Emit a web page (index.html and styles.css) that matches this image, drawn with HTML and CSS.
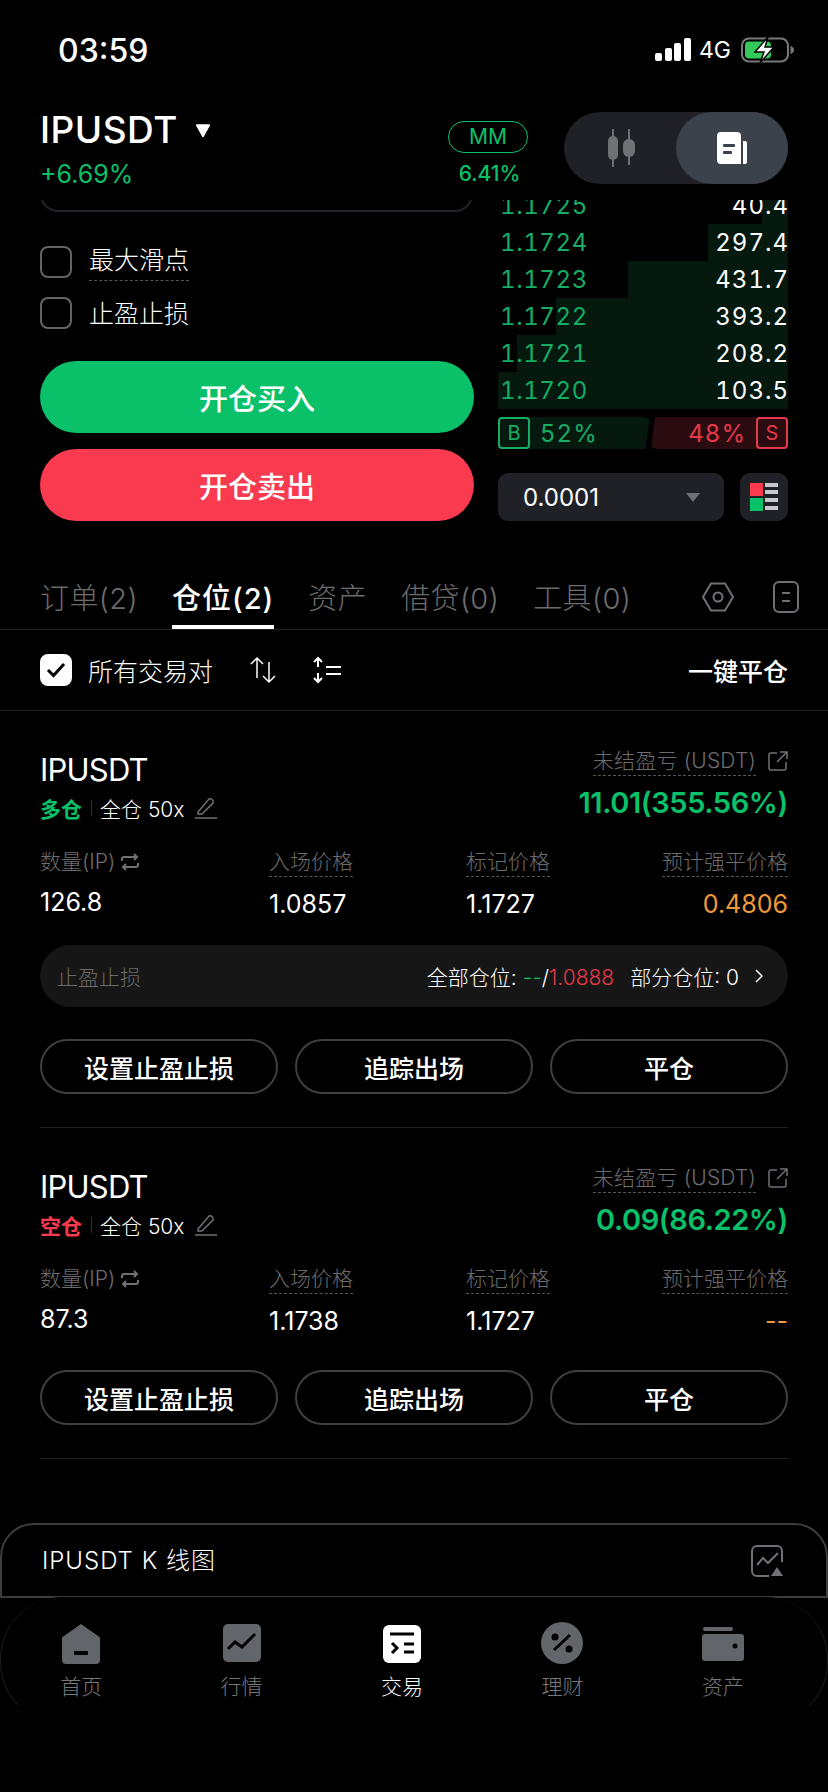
FILE: index.html
```html
<!DOCTYPE html>
<html lang="zh-CN">
<head>
    <meta charset="UTF-8">
    <meta name="viewport" content="width=device-width, initial-scale=1.0">
    <title>IPUSDT</title>
    <link rel="stylesheet" href="styles.css">
</head>
<body>
    <div class="screen">
        <div class="status-bar">
            <span class="time">03:59</span>
            <div class="status-right">
                <svg width="36" height="24" viewBox="0 0 36 24" fill="#fff"><rect x="0" y="15" width="7" height="8" rx="2"/><rect x="10" y="10" width="7" height="13" rx="2"/><rect x="19" y="5" width="7" height="18" rx="2"/><rect x="29" y="0" width="7" height="23" rx="2"/></svg>
                <span class="net">4G</span>
                <svg width="54" height="26" viewBox="0 0 54 26"><rect x="1" y="1.500" width="46" height="23" rx="7" fill="none" stroke="#77797b" stroke-width="2"/><rect x="4" y="4.500" width="26" height="17" rx="4" fill="#34c759"/><path d="M49.500 9v8c2-.6 3.500-2 3.500-4s-1.500-3.400-3.500-4z" fill="#77797b"/><path d="M27 0 14 15h9l-4 11 14-16h-9z" fill="#fff" stroke="#000" stroke-width="1.500"/></svg>
            </div>
        </div>

        <div class="pair-head">
            <div class="pair-info">
                <div class="pair-name">IPUSDT <svg class="caret" width="16" height="15" viewBox="0 0 18 16"><path d="M2 2h14L9 14.500z" fill="#fff" stroke="#fff" stroke-width="2" stroke-linejoin="round"/></svg></div>
                <div class="pair-change">+6.69%</div>
            </div>
            <div class="mm">
                <div class="mm-badge">MM</div>
                <div class="mm-value">6.41%</div>
            </div>
            <div class="view-toggle">
                <div class="toggle-item">
                    <svg width="32" height="38" viewBox="0 0 32 38" fill="#6f7175"><rect x="8" y="0" width="2" height="38"/><rect x="4" y="7" width="10" height="24" rx="5"/><rect x="24" y="0" width="2" height="36"/><rect x="19" y="10" width="12" height="18" rx="6"/></svg>
                </div>
                <div class="toggle-item active">
                    <svg width="32" height="34" viewBox="0 0 32 34"><path d="M5 1h16a4 4 0 0 1 4 4v28H5a4 4 0 0 1-4-4V5a4 4 0 0 1 4-4z" fill="#fff"/><path d="M27 10h2a2 2 0 0 1 2 2v19a2 2 0 0 1-2 2h-2z" fill="#fff"/><rect x="7" y="13" width="12" height="3" rx="1" fill="#3c424c"/><rect x="7" y="20" width="9" height="3" rx="1" fill="#3c424c"/></svg>
                </div>
            </div>
        </div>

        <div class="scroll-area">
            <div class="trade">
                <div class="order-form">
                    <div class="form-stub"></div>
                    <div class="check-row">
                        <span class="check"></span>
                        <span class="check-label dashed">最大滑点</span>
                    </div>
                    <div class="check-row">
                        <span class="check"></span>
                        <span class="check-label">止盈止损</span>
                    </div>
                    <button class="open-btn buy">开仓买入</button>
                    <button class="open-btn sell">开仓卖出</button>
                </div>
                <div class="book">
                    <div class="book-rows">
                        <div class="book-row"><i class="depth d1"></i><span class="price">1.1725</span><span class="qty">40.4</span></div>
                        <div class="book-row"><i class="depth d2"></i><span class="price">1.1724</span><span class="qty">297.4</span></div>
                        <div class="book-row"><i class="depth d3"></i><span class="price">1.1723</span><span class="qty">431.7</span></div>
                        <div class="book-row"><i class="depth d4"></i><span class="price">1.1722</span><span class="qty">393.2</span></div>
                        <div class="book-row"><i class="depth d5"></i><span class="price">1.1721</span><span class="qty">208.2</span></div>
                        <div class="book-row"><i class="depth d6"></i><span class="price">1.1720</span><span class="qty">103.5</span></div>
                    </div>
                    <div class="ratio">
                        <div class="ratio-side ratio-buy"><span class="ratio-box">B</span><span>52%</span></div>
                        <div class="ratio-side ratio-sell"><span>48%</span><span class="ratio-box">S</span></div>
                    </div>
                    <div class="book-tools">
                        <div class="tick-select">
                            <span>0.0001</span>
                            <svg width="14" height="9" viewBox="0 0 14 9"><path d="M0 0h14L7 9z" fill="#6f7175"/></svg>
                        </div>
                        <div class="layout-btn">
                            <svg width="28" height="28" viewBox="0 0 28 28"><rect x="0" y="0" width="13" height="13" fill="#fa3a4f"/><rect x="0" y="15" width="13" height="13" fill="#0ac16a"/><g fill="#c8c8cc"><rect x="15" y="0" width="13" height="4"/><rect x="15" y="7" width="13" height="4"/><rect x="15" y="15" width="13" height="4"/><rect x="15" y="23" width="13" height="4"/></g></svg>
                        </div>
                    </div>
                </div>
            </div>

            <div class="tabs">
                <div class="tab">订单(2)</div>
                <div class="tab active">仓位(2)</div>
                <div class="tab">资产</div>
                <div class="tab">借贷(0)</div>
                <div class="tab">工具(0)</div>
                <div class="tab-icons">
                    <svg width="32" height="30" viewBox="0 0 32 30" fill="none" stroke="#6f7175" stroke-width="2"><path d="M9 1.500h14L31 15l-8 13.500H9L1 15z" stroke-linejoin="round"/><circle cx="16" cy="15" r="4.500"/></svg>
                    <svg width="26" height="32" viewBox="0 0 26 32" fill="none" stroke="#6f7175" stroke-width="2"><rect x="1" y="1" width="24" height="30" rx="5"/><path d="M9 12h8M9 20h8"/></svg>
                </div>
            </div>

            <div class="filter-row">
                <span class="check checked">
                    <svg width="20" height="16" viewBox="0 0 20 16" fill="none" stroke="#000" stroke-width="3"><path d="M2 8l5.500 5.500L18 2"/></svg>
                </span>
                <span class="filter-label">所有交易对</span>
                <svg class="sort-icon" width="28" height="28" viewBox="0 0 28 28" fill="none" stroke="#fff" stroke-width="1.500"><path d="M8 22V2M2 8l6-6 6 6M20 6v20M14 20l6 6 6-6"/></svg>
                <svg class="list-icon" width="28" height="28" viewBox="0 0 28 28" fill="none" stroke="#fff" stroke-width="2"><path d="M5 11V2M1 6l4-4 4 4M5 17v9M1 22l4 4 4-4M13 11h15M13 18h15"/></svg>
                <span class="close-all">一键平仓</span>
            </div>

            <div class="position">
                <div class="pos-top">
                    <div>
                        <div class="pos-name">IPUSDT</div>
                        <div class="pos-tags">
                            <span class="side long">多仓</span>
                            <span class="tag-line"></span>
                            <span class="margin">全仓 50x</span>
                            <svg width="22" height="22" viewBox="0 0 22 22" fill="none" stroke="#6f7175" stroke-width="1.500"><path d="M3 15 14 2c2-1 5 1 4 4L7 17H3zM0 21h22"/></svg>
                        </div>
                    </div>
                    <div class="pnl">
                        <div class="pnl-label"><span class="dashed">未结盈亏 (USDT)</span><svg width="20" height="20" viewBox="0 0 20 20" fill="none" stroke="#6f7175" stroke-width="1.500"><path d="M9 2H3a2 2 0 0 0-2 2v13a2 2 0 0 0 2 2h13a2 2 0 0 0 2-2v-6M9 11 19 1M12 1h7v7"/></svg></div>
                        <div class="pnl-value">11.01(355.56%)</div>
                    </div>
                </div>
                <div class="pos-grid">
                    <div>
                        <div class="field-label">数量(IP) <svg width="18" height="18" viewBox="0 0 18 18" fill="none" stroke="#6f7175" stroke-width="2"><path d="M1 8V6a2 2 0 0 1 2-2h13M13 1l3 3-3 3M17 10v2a2 2 0 0 1-2 2H2M5 11l-3 3 3 3"/></svg></div>
                        <div class="field-value first">126.8</div>
                    </div>
                    <div>
                        <div class="field-label dashed">入场价格</div>
                        <div class="field-value">1.0857</div>
                    </div>
                    <div>
                        <div class="field-label dashed">标记价格</div>
                        <div class="field-value">1.1727</div>
                    </div>
                    <div class="field-end">
                        <div class="field-label dashed">预计强平价格</div>
                        <div class="field-value orange">0.4806</div>
                    </div>
                </div>
                <div class="tp-row">
                    <span class="tp-title">止盈止损</span>
                    <span class="tp-info">全部仓位: <span class="green">--</span>/<span class="red">1.0888</span></span>
                    <span class="tp-info tp-part">部分仓位: 0</span>
                    <svg width="8" height="14" viewBox="0 0 8 14" fill="none" stroke="#fff" stroke-width="1.500"><path d="M1 1l6 6-6 6"/></svg>
                </div>
                <div class="pos-actions">
                    <button class="ghost-btn">设置止盈止损</button>
                    <button class="ghost-btn">追踪出场</button>
                    <button class="ghost-btn">平仓</button>
                </div>
            </div>

            <div class="position no-tp">
                <div class="pos-top">
                    <div>
                        <div class="pos-name">IPUSDT</div>
                        <div class="pos-tags">
                            <span class="side short">空仓</span>
                            <span class="tag-line"></span>
                            <span class="margin">全仓 50x</span>
                            <svg width="22" height="22" viewBox="0 0 22 22" fill="none" stroke="#6f7175" stroke-width="1.500"><path d="M3 15 14 2c2-1 5 1 4 4L7 17H3zM0 21h22"/></svg>
                        </div>
                    </div>
                    <div class="pnl">
                        <div class="pnl-label"><span class="dashed">未结盈亏 (USDT)</span><svg width="20" height="20" viewBox="0 0 20 20" fill="none" stroke="#6f7175" stroke-width="1.500"><path d="M9 2H3a2 2 0 0 0-2 2v13a2 2 0 0 0 2 2h13a2 2 0 0 0 2-2v-6M9 11 19 1M12 1h7v7"/></svg></div>
                        <div class="pnl-value">0.09(86.22%)</div>
                    </div>
                </div>
                <div class="pos-grid">
                    <div>
                        <div class="field-label">数量(IP) <svg width="18" height="18" viewBox="0 0 18 18" fill="none" stroke="#6f7175" stroke-width="2"><path d="M1 8V6a2 2 0 0 1 2-2h13M13 1l3 3-3 3M17 10v2a2 2 0 0 1-2 2H2M5 11l-3 3 3 3"/></svg></div>
                        <div class="field-value first">87.3</div>
                    </div>
                    <div>
                        <div class="field-label dashed">入场价格</div>
                        <div class="field-value">1.1738</div>
                    </div>
                    <div>
                        <div class="field-label dashed">标记价格</div>
                        <div class="field-value">1.1727</div>
                    </div>
                    <div class="field-end">
                        <div class="field-label dashed">预计强平价格</div>
                        <div class="field-value orange">--</div>
                    </div>
                </div>
                <div class="pos-actions">
                    <button class="ghost-btn">设置止盈止损</button>
                    <button class="ghost-btn">追踪出场</button>
                    <button class="ghost-btn">平仓</button>
                </div>
            </div>
        </div>

        <div class="kline-bar">
            <span>IPUSDT K 线图</span>
            <svg width="32" height="32" viewBox="0 0 32 32" fill="none" stroke="#6f7175" stroke-width="2"><path d="M31 17V6a5 5 0 0 0-5-5H6a5 5 0 0 0-5 5v20a5 5 0 0 0 5 5h12"/><path d="M6 20l6-7 5 5 10-10"/><path d="M26 22l6 9H20z" fill="#6f7175" stroke="none"/></svg>
        </div>

        <div class="tab-bar">
            <div class="nav-item">
                <svg width="44" height="44" viewBox="-3 -3 44 44"><path d="M19 0 36 12a3 3 0 0 1 2 3v21a4 4 0 0 1-4 4H4a4 4 0 0 1-4-4V15a3 3 0 0 1 2-3z" fill="#62656a"/><rect x="12" y="27" width="14" height="4" rx="1" fill="#000"/></svg>
                <span>首页</span>
            </div>
            <div class="nav-item">
                <svg width="44" height="44" viewBox="-3 -3 44 44"><rect width="38" height="38" rx="5" fill="#62656a"/><path d="M5 25l7-7 7 5 13-13" fill="none" stroke="#000" stroke-width="3"/></svg>
                <span>行情</span>
            </div>
            <div class="nav-item active">
                <svg width="44" height="44" viewBox="-3 -4 44 44"><rect width="38" height="38" rx="6" fill="#fff"/><path d="M7 9h24M21 19h10M21 27h10" stroke="#000" stroke-width="3" fill="none"/><path d="M9 18l5 5-5 5" stroke="#000" stroke-width="3" fill="none"/></svg>
                <span>交易</span>
            </div>
            <div class="nav-item">
                <svg width="44" height="44" viewBox="-1 -1 44 44"><circle cx="21" cy="21" r="21" fill="#62656a"/><circle cx="14" cy="15" r="3.500" fill="#000"/><circle cx="28" cy="27" r="3.500" fill="#000"/><path d="M13 28 29 13" stroke="#000" stroke-width="3"/></svg>
                <span>理财</span>
            </div>
            <div class="nav-item">
                <svg width="44" height="44" viewBox="-1 -6 44 44"><rect x="1" y="0" width="30" height="4" rx="2" fill="#62656a"/><rect x="0" y="7" width="42" height="27" rx="3" fill="#62656a"/><circle cx="33" cy="19" r="2.500" fill="#000"/></svg>
                <span>资产</span>
            </div>
        </div>
    </div>
</body>
</html>
```

FILE: styles.css
```css
* {
    margin: 0;
    padding: 0;
    box-sizing: border-box;
}

body {
    background: #000;
    color: #fff;
    font-family: Inter, 'Noto Sans CJK SC', sans-serif;
}

button {
    font-family: inherit;
    color: #fff;
    background: none;
    border: none;
}

.screen {
    width: 828px;
    height: 1792px;
    display: flex;
    flex-direction: column;
    overflow: hidden;
}

.dashed {
    border-bottom: 1px dashed #555;
}

.green { color: #0ac16a; }
.red { color: #e5384a; }
.orange { color: #f0993a; }

/* status bar */
.status-bar {
    height: 100px;
    flex: none;
    display: flex;
    justify-content: space-between;
    align-items: center;
    padding: 0 33px 0 58px;
}

.time {
    font-size: 32px;
    font-weight: 500;
}

.status-right {
    display: flex;
    align-items: center;
    gap: 8px;
}

.net {
    font-size: 23px;
    margin-right: 2px;
}

/* pair header */
.pair-head {
    height: 100px;
    flex: none;
    display: flex;
    padding: 8px 40px 0;
}

.pair-info {
    flex: 1;
}

.pair-name {
    font-size: 37px;
    line-height: 44px;
    font-weight: 500;
    letter-spacing: 0.5px;
    display: flex;
    align-items: center;
    gap: 17px;
}

.pair-change {
    margin-top: 6px;
    font-size: 25px;
    line-height: 32px;
    color: #0ac16a;
}

.mm {
    width: 80px;
    margin-right: 36px;
    margin-top: 13px;
    text-align: center;
}

.mm-badge {
    height: 32px;
    border: 1px solid #0ac16a;
    border-radius: 16px;
    color: #0ac16a;
    font-size: 21px;
    line-height: 30px;
}

.mm-value {
    margin-top: 6px;
    padding-left: 3px;
    font-size: 21px;
    font-weight: 500;
    line-height: 30px;
    color: #0ac16a;
}

.view-toggle {
    width: 224px;
    height: 72px;
    margin-top: 4px;
    background: #1f2126;
    border-radius: 36px;
    display: flex;
}

.toggle-item {
    flex: 1;
    display: flex;
    align-items: center;
    justify-content: center;
    border-radius: 36px;
}

.toggle-item.active {
    background: #3c424c;
}

/* scrolled content */
.scroll-area {
    flex: 1;
    overflow: hidden;
    min-height: 0;
}

.trade {
    display: flex;
    gap: 24px;
    padding: 0 40px;
}

.order-form {
    width: 434px;
}

.form-stub {
    height: 46px;
    margin-top: -34px;
    margin-right: 1px;
    border: 2px solid #222327;
    border-top: none;
    border-radius: 0 0 18px 18px;
}

.check-row {
    height: 32px;
    margin-top: 34px;
    display: flex;
    gap: 17px;
}

.check-row + .check-row {
    margin-top: 19px;
}

.check {
    width: 32px;
    height: 32px;
    flex: none;
    border: 2px solid #646464;
    border-radius: 8px;
    display: flex;
    align-items: center;
    justify-content: center;
}

.check.checked {
    background: #fff;
    border-color: #fff;
}

.check-label {
    height: 28px;
    font-size: 25px;
    line-height: 28px;
    font-weight: 300;
}

.check-label.dashed {
    box-sizing: content-box;
    padding-bottom: 6px;
}

.check-row + .check-row .check-label {
    margin-top: 3px;
}

.open-btn {
    display: block;
    width: 100%;
    height: 72px;
    border-radius: 36px;
    font-size: 29px;
    font-weight: 500;
}

.open-btn.buy {
    margin-top: 32px;
    background: #0ac16a;
}

.open-btn.sell {
    margin-top: 16px;
    background: #fa3a4f;
}

.book {
    width: 290px;
}

.book-rows {
    margin-top: -13px;
}

.book-row {
    position: relative;
    height: 37px;
    display: flex;
    justify-content: space-between;
    align-items: center;
    font-size: 24px;
    letter-spacing: 1px;
    font-variant-numeric: tabular-nums;
}

.book-row span {
    position: relative;
}

.price {
    margin-left: 2px;
    letter-spacing: 0.6px;
    color: #17ad65;
}

.qty {
    margin-right: -1px;
}

.depth {
    position: absolute;
    top: 0;
    bottom: 0;
    right: 0;
    background: #05190f;
}

.d1 { width: 26px; }
.d2 { width: 80px; }
.d3 { width: 160px; }
.d4 { width: 232px; }
.d5 { width: 271px; }
.d6 { width: 290px; }

.ratio {
    height: 32px;
    margin-top: 8px;
    display: flex;
    font-size: 24px;
    letter-spacing: 1px;
    font-variant-numeric: tabular-nums;
}

.ratio-side {
    display: flex;
    align-items: center;
    gap: 10px;
    border-radius: 6px;
}

.ratio-buy {
    width: 152px;
    color: #17ad65;
    background: #05190f;
    clip-path: polygon(0 0, 100% 0, 97% 100%, 0 100%);
}

.ratio-sell {
    width: 137px;
    margin-left: 1px;
    justify-content: flex-end;
    color: #e5384a;
    background: #2a0b10;
    clip-path: polygon(3% 0, 100% 0, 100% 100%, 0 100%);
}

.ratio-box {
    width: 32px;
    height: 32px;
    border: 2px solid currentColor;
    border-radius: 4px;
    font-size: 20px;
    letter-spacing: 0;
    text-align: center;
    line-height: 28px;
}

.book-tools {
    margin-top: 24px;
    display: flex;
    gap: 16px;
}

.tick-select {
    width: 226px;
    height: 48px;
    padding: 0 24px 0 25px;
    background: #1f2126;
    border-radius: 10px;
    display: flex;
    align-items: center;
    justify-content: space-between;
    font-size: 24px;
}

.layout-btn {
    width: 48px;
    height: 48px;
    background: #1f2126;
    border-radius: 10px;
    display: flex;
    align-items: center;
    justify-content: center;
}

/* tabs */
.tabs {
    margin-top: 48px;
    height: 61px;
    padding: 0 29px 0 40px;
    border-bottom: 1px solid #222;
    display: flex;
    gap: 34px;
}

.tab {
    height: 60px;
    font-size: 29px;
    line-height: 59px;
    font-weight: 300;
    letter-spacing: 0.4px;
    color: #6c6c6c;
}

.tab.active {
    color: #fff;
    font-weight: 500;
    letter-spacing: 1px;
    border-bottom: 4px solid #fff;
}

.tab-icons {
    margin-left: auto;
    height: 56px;
    display: flex;
    align-items: center;
    gap: 39px;
}

.filter-row {
    height: 81px;
    padding: 0 40px;
    border-bottom: 1px solid #222;
    display: flex;
    align-items: center;
}

.filter-label {
    margin-left: 16px;
    font-size: 25px;
    font-weight: 300;
}

.sort-icon {
    margin-left: 36px;
}

.list-icon {
    margin-left: 36px;
}

.close-all {
    margin-left: auto;
    font-size: 25px;
    font-weight: 500;
}

/* positions */
.position {
    margin: 0 40px;
    height: 417px;
    padding-top: 35px;
    border-bottom: 1px solid #1e1e1e;
}

.position.no-tp {
    height: 331px;
}

.pos-top {
    display: flex;
    justify-content: space-between;
}

.pos-name {
    margin-top: 6px;
    font-size: 31px;
    line-height: 36px;
    letter-spacing: -0.8px;
}

.pos-tags {
    margin-top: 6px;
    height: 28px;
    display: flex;
    align-items: center;
    font-size: 21px;
}

.side {
    font-weight: 700;
}

.long { color: #0ac16a; }
.short { color: #fa3a4f; }

.tag-line {
    width: 1px;
    height: 16px;
    margin: 0 8px 0 9px;
    background: #333;
}

.margin {
    margin-right: 11px;
    font-weight: 300;
}

.pnl {
    text-align: right;
}

.pnl-label {
    display: flex;
    align-items: center;
    justify-content: flex-end;
    gap: 12px;
    height: 30px;
    color: #6c6c6c;
    font-size: 21px;
    font-weight: 300;
    letter-spacing: 0.2px;
}

.pnl-label .dashed {
    line-height: 28px;
}

.pnl-value {
    margin-top: 10px;
    font-size: 29px;
    line-height: 34px;
    font-weight: 600;
    letter-spacing: -0.4px;
    color: #0ac16a;
}

.pos-grid {
    margin-top: 26px;
    display: grid;
    grid-template-columns: 229px 197px 1fr auto;
}

.field-label {
    display: inline-block;
    color: #6c6c6c;
    font-size: 21px;
    line-height: 28px;
    font-weight: 300;
}

.field-label svg {
    vertical-align: -2px;
}

.field-value {
    margin-top: 13px;
    font-size: 25px;
    line-height: 28px;
}

.field-value.first {
    margin-top: 12px;
}

.field-end {
    text-align: right;
}

.tp-row {
    margin-top: 27px;
    height: 62px;
    padding: 0 25px 0 17px;
    background: #161616;
    border-radius: 31px;
    display: flex;
    align-items: center;
    font-size: 21px;
    font-weight: 300;
}

.tp-title {
    flex: 1;
    color: #6c6c6c;
}

.tp-part {
    margin: 0 16px;
}

.pos-actions {
    margin-top: 32px;
    display: grid;
    grid-template-columns: repeat(3, 1fr);
    gap: 17px;
}

.no-tp .pos-actions {
    margin-top: 35px;
}

.ghost-btn {
    height: 55px;
    border: 2px solid #3f3f3f;
    border-radius: 28px;
    font-size: 25px;
    font-weight: 500;
}

/* bottom */
.kline-bar {
    height: 75px;
    flex: none;
    margin-bottom: -1px;
    padding: 0 43px 5px 40px;
    border: 2px solid #3d3d40;
    border-radius: 34px 34px 0 0;
    display: flex;
    align-items: center;
    justify-content: space-between;
    font-size: 24px;
    font-weight: 300;
    letter-spacing: 1px;
}

.kline-bar svg {
    margin-top: 5px;
}

.tab-bar {
    height: 127px;
    flex: none;
    margin-bottom: 68px;
    padding: 24px 24px 0 0;
    border: 1px solid #1c1c1c;
    border-top: none;
    border-bottom-color: #000;
    border-radius: 62px;
    display: grid;
    grid-template-columns: repeat(5, 1fr);
    background: #000;
}

.nav-item {
    display: flex;
    flex-direction: column;
    align-items: center;
    gap: 7px;
    font-size: 21px;
    line-height: 29px;
    font-weight: 300;
    color: #77797c;
}

.nav-item.active {
    color: #fff;
}
```
